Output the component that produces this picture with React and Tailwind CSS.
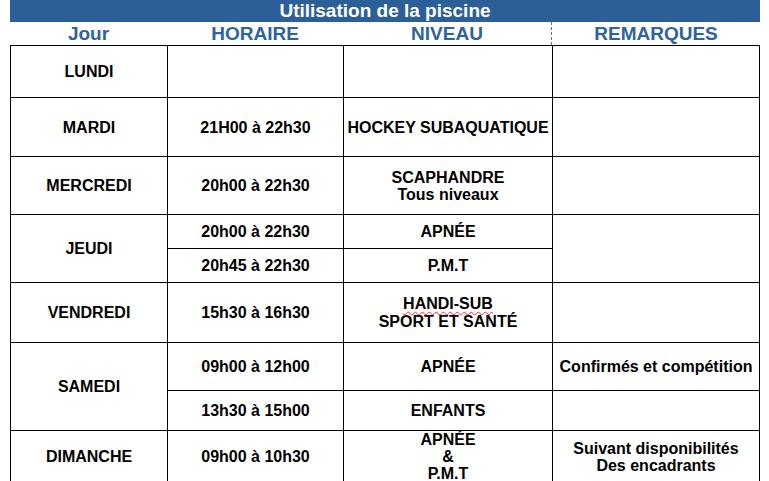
const cell = "bg-white flex flex-col items-center justify-center text-center";

function Cell({ children, className = "" }) {
  return <div className={`${cell} ${className}`}>{children}</div>;
}

export default function App() {
  return (
    <div
      className="bg-white w-[769px] h-[481px] overflow-hidden pl-[10px] text-black font-bold"
      style={{ fontFamily: '"Liberation Sans", Arial, sans-serif' }}
    >
      <div className="w-[750px]">
        {/* titre */}
        <div className="h-[22px] bg-[#2c5f98] text-white text-[19px] leading-[22px] text-center">
          Utilisation de la piscine
        </div>

        {/* entêtes */}
        <div className="grid grid-cols-[157px_176px_209px_208px] h-[23px] text-[19px] leading-[23px] text-[#2e63a1] text-center">
          <div>Jour</div>
          <div>HORAIRE</div>
          <div className="border-r border-dashed border-gray-500">NIVEAU</div>
          <div>REMARQUES</div>
        </div>

        {/* tableau */}
        <div className="grid grid-cols-[156px_175px_208px_206px] grid-rows-[51px_58px_57px_33px_33px_59px_47px_39px_51px] gap-px p-px bg-black text-[16px] leading-[17px]">
          <Cell>LUNDI</Cell>
          <Cell />
          <Cell />
          <Cell />

          <Cell>MARDI</Cell>
          <Cell>21H00 à 22h30</Cell>
          <Cell>HOCKEY SUBAQUATIQUE</Cell>
          <Cell />

          <Cell>MERCREDI</Cell>
          <Cell>20h00 à 22h30</Cell>
          <Cell>
            <span>SCAPHANDRE</span>
            <span>Tous niveaux</span>
          </Cell>
          <Cell />

          <Cell className="row-span-2">JEUDI</Cell>
          <Cell>20h00 à 22h30</Cell>
          <Cell>APNÉE</Cell>
          <Cell className="row-span-2" />
          <Cell>20h45 à 22h30</Cell>
          <Cell>P.M.T</Cell>

          <Cell>VENDREDI</Cell>
          <Cell>15h30 à 16h30</Cell>
          <Cell className="leading-[18px]">
            <span className="underline decoration-wavy decoration-red-500 decoration-1 underline-offset-2">
              HANDI-SUB
            </span>
            <span>SPORT ET SANTÉ</span>
          </Cell>
          <Cell />

          <Cell className="row-span-2">SAMEDI</Cell>
          <Cell>09h00 à 12h00</Cell>
          <Cell>APNÉE</Cell>
          <Cell>Confirmés et compétition</Cell>
          <Cell>13h30 à 15h00</Cell>
          <Cell>ENFANTS</Cell>
          <Cell />

          <Cell>DIMANCHE</Cell>
          <Cell>09h00 à 10h30</Cell>
          <Cell>
            <span>APNÉE</span>
            <span>&amp;</span>
            <span>P.M.T</span>
          </Cell>
          <Cell>
            <span>Suivant disponibilités</span>
            <span>Des encadrants</span>
          </Cell>
        </div>
      </div>
    </div>
  );
}
